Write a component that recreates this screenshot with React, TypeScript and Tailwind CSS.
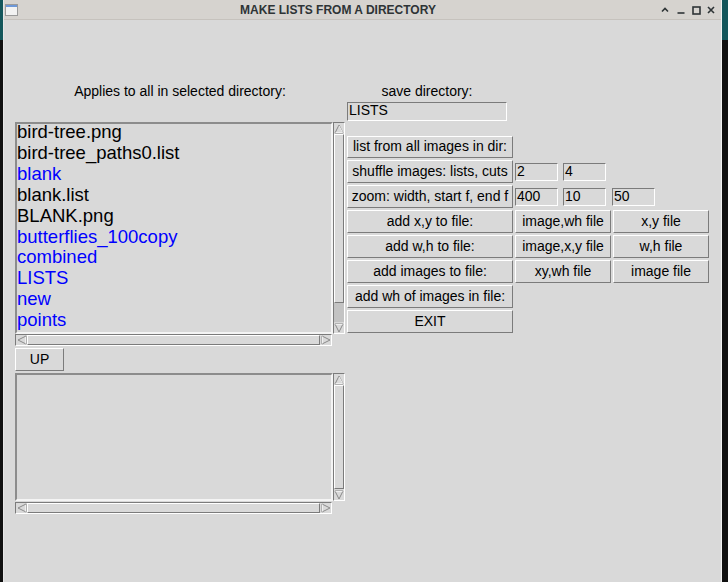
import React from 'react';

// Tk-style bevels
const RAISED = 'border border-t-white border-l-white border-r-[#7b7b7b] border-b-[#7b7b7b]';
const SUNKEN = 'border border-t-[#7b7b7b] border-l-[#7b7b7b] border-r-white border-b-white';

const files = [
  { name: 'bird-tree.png', dir: false },
  { name: 'bird-tree_paths0.list', dir: false },
  { name: 'blank', dir: true },
  { name: 'blank.list', dir: false },
  { name: 'BLANK.png', dir: false },
  { name: 'butterflies_100copy', dir: true },
  { name: 'combined', dir: true },
  { name: 'LISTS', dir: true },
  { name: 'new', dir: true },
  { name: 'points', dir: true },
];

const Arrow = ({ dir }: { dir: 'up' | 'down' | 'left' | 'right' }) => {
  const pts = {
    up: '5,1 9,9 1,9',
    down: '1,1 9,1 5,9',
    left: '1,5 9,1 9,9',
    right: '1,1 9,5 1,9',
  }[dir];
  return (
    <svg viewBox="0 0 10 10" className="h-[10px] w-[10px]">
      <polygon points={pts} fill="#d9d9d9" stroke="#8a8a8a" strokeWidth="1" />
      {dir === 'up' && <polyline points="1.5,8.5 8.5,8.5 5,1.8" fill="none" stroke="#fff" strokeWidth="0.8" />}
      {dir === 'down' && <polyline points="1.5,1.5 8.5,1.5" fill="none" stroke="#fff" strokeWidth="0.8" />}
      {dir === 'left' && <polyline points="8.5,1.8 8.5,8.5" fill="none" stroke="#fff" strokeWidth="0.8" />}
      {dir === 'right' && <polyline points="1.5,1.5 1.5,8.5" fill="none" stroke="#fff" strokeWidth="0.8" />}
    </svg>
  );
};

const VScroll = ({ thumb }: { thumb: string }) => (
  <div className={`flex h-full w-[12px] flex-col bg-[#c3c3c3] ${SUNKEN}`}>
    <div className="flex h-[11px] items-center justify-center bg-[#d9d9d9]">
      <Arrow dir="up" />
    </div>
    <div className={`bg-[#d9d9d9] ${RAISED} ${thumb}`} />
    <div className="flex-1" />
    <div className="flex h-[11px] items-center justify-center bg-[#d9d9d9]">
      <Arrow dir="down" />
    </div>
  </div>
);

const HScroll = () => (
  <div className={`flex h-[12px] w-[317px] bg-[#c3c3c3] ${SUNKEN}`}>
    <div className="flex w-[11px] items-center justify-center bg-[#d9d9d9]">
      <Arrow dir="left" />
    </div>
    <div className={`flex-1 bg-[#d9d9d9] ${RAISED}`} />
    <div className="flex w-[11px] items-center justify-center bg-[#d9d9d9]">
      <Arrow dir="right" />
    </div>
  </div>
);

const Btn = ({ label, w, h = 'h-[23px]' }: { label: string; w: string; h?: string }) => (
  <div className={`flex items-center justify-center bg-[#d9d9d9] pb-[1px] text-[14px] text-black ${RAISED} ${w} ${h}`}>
    {label}
  </div>
);

const Entry = ({ value, cls = '' }: { value: string; cls?: string }) => (
  <div className={`h-[18px] w-[43px] self-center bg-[#d9d9d9] pl-[1px] text-[14px] leading-[15px] text-black ${SUNKEN} ${cls}`}>
    {value}
  </div>
);

const TitleBar = () => (
  <div className="flex h-[20px] items-center border-b border-[#c6c2bd] bg-[#d6d3cf]">
    <div className="ml-[1px] h-[12px] w-[13px] border border-[#9a9a9a] bg-[#f2f2f2]">
      <div className="h-[2px] bg-[#6d98d8]" />
    </div>
    <div className="flex-1 text-center text-[12px] font-bold text-[#2e3436]">
      MAKE LISTS FROM A DIRECTORY
    </div>
    <div className="mr-[3px] flex items-center">
      <svg viewBox="0 0 14 14" className="h-[14px] w-[14px]">
        <polyline points="4,8.5 7,5.5 10,8.5" fill="none" stroke="#2e3436" strokeWidth="1.6" />
      </svg>
      <svg viewBox="0 0 14 14" className="ml-[2px] h-[14px] w-[14px]">
        <line x1="3.5" y1="10" x2="10.5" y2="10" stroke="#2e3436" strokeWidth="1.6" />
      </svg>
      <svg viewBox="0 0 14 14" className="ml-[1px] h-[14px] w-[14px]">
        <rect x="4" y="4" width="7" height="7" fill="none" stroke="#2e3436" strokeWidth="1.6" />
      </svg>
      <svg viewBox="0 0 14 14" className="ml-[1px] h-[14px] w-[14px]">
        <path d="M4 4 L10 10 M10 4 L4 10" stroke="#2e3436" strokeWidth="1.6" />
      </svg>
    </div>
  </div>
);

export default function App() {
  return (
    <div className="h-screen w-screen overflow-hidden bg-[linear-gradient(#13565b_0,#13565b_40px,#101010_40px)] font-['Liberation_Sans',Arial,sans-serif]">
      <div className="ml-[3px] flex h-full w-[719px] flex-col border-l border-r border-l-[#e6e6e6] border-r-[#f0f0f0] bg-[#d9d9d9]">
        <TitleBar />

        <div className="flex gap-[2px] pl-[11px] pt-[63px]">
          {/* left column: directory browser */}
          <div className="flex w-[330px] flex-col">
            <div className="h-[17px] text-center text-[14px] leading-[17px] text-black">
              Applies to all in selected directory:
            </div>
            <div className="mt-[22px] flex h-[212px]">
              <div className="h-full w-[318px] border-2 border-t-[#8c8c8c] border-l-[#8c8c8c] border-r-[#f4f4f4] border-b-[#f4f4f4] bg-[#d9d9d9]">
                <div className="-mt-[2px] text-[18.5px] leading-[20.9px]">
                  {files.map(f => (
                    <div key={f.name} className={f.dir ? 'text-[#0000ff]' : 'text-black'}>
                      {f.name}
                    </div>
                  ))}
                </div>
              </div>
              <VScroll thumb="h-[169px]" />
            </div>
            <HScroll />
            <div className="mt-[2px]">
              <Btn label="UP" w="w-[49px]" />
            </div>
            <div className="mt-[2px] flex h-[128px]">
              <div className="h-full w-[318px] border-2 border-t-[#8c8c8c] border-l-[#8c8c8c] border-r-[#f4f4f4] border-b-[#f4f4f4] bg-[#d9d9d9]" />
              <VScroll thumb="h-[104px]" />
            </div>
            <div className="mt-[1px]">
              <HScroll />
            </div>
          </div>

          {/* right column: actions */}
          <div className="flex flex-col">
            <div className="h-[17px] w-[160px] text-center text-[14px] leading-[17px] text-black">
              save directory:
            </div>
            <div className={`mt-[2px] h-[19px] w-[160px] pl-[1px] text-[14px] leading-[15px] text-black ${SUNKEN}`}>
              LISTS
            </div>

            <div className="mt-[15px] flex flex-col gap-[2px]">
              <div className="flex">
                <Btn label="list from all images in dir:" w="w-[166px]" h="h-[22px]" />
              </div>
              <div className="flex">
                <Btn label="shuffle images: lists, cuts" w="w-[166px]" />
                <Entry value="2" cls="ml-[2px]" />
                <Entry value="4" cls="ml-[5px]" />
              </div>
              <div className="flex">
                <Btn label="zoom: width, start f, end f" w="w-[166px]" />
                <Entry value="400" cls="ml-[2px]" />
                <Entry value="10" cls="ml-[5px]" />
                <Entry value="50" cls="ml-[6px]" />
              </div>
              <div className="flex gap-[2px]">
                <Btn label="add x,y to file:" w="w-[166px]" />
                <Btn label="image,wh file" w="w-[96px]" />
                <Btn label="x,y file" w="w-[96px]" />
              </div>
              <div className="flex gap-[2px]">
                <Btn label="add w,h to file:" w="w-[166px]" />
                <Btn label="image,x,y file" w="w-[96px]" />
                <Btn label="w,h file" w="w-[96px]" />
              </div>
              <div className="flex gap-[2px]">
                <Btn label="add images to file:" w="w-[166px]" />
                <Btn label="xy,wh file" w="w-[96px]" />
                <Btn label="image file" w="w-[96px]" />
              </div>
              <div className="flex">
                <Btn label="add wh of images in file:" w="w-[166px]" />
              </div>
              <div className="flex">
                <Btn label="EXIT" w="w-[166px]" />
              </div>
            </div>
          </div>
        </div>
      </div>
    </div>
  );
}
